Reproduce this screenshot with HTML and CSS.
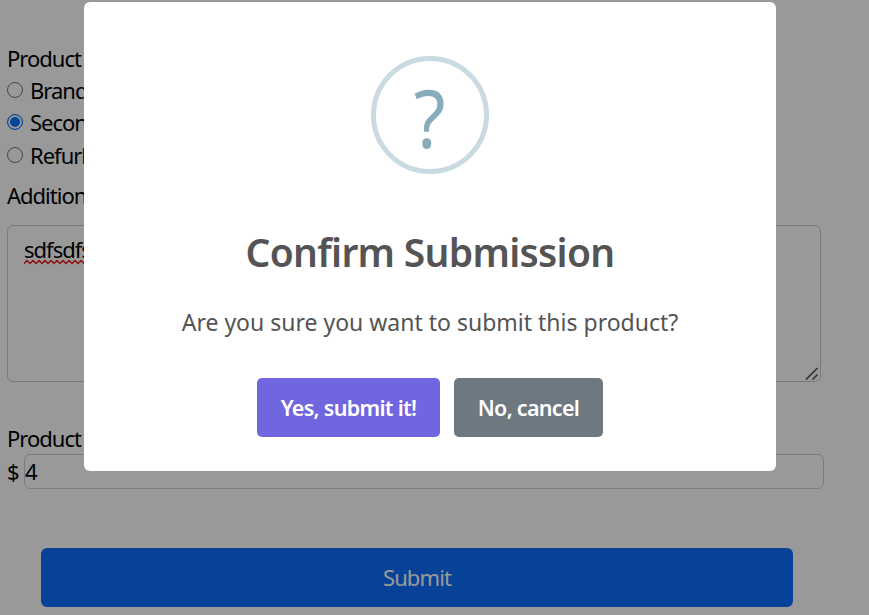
FILE: index.html
```html
<!DOCTYPE html>
<html lang="en">
<head>
<meta charset="utf-8">
<title>Product submission</title>
<link rel="stylesheet" href="styles.css">
</head>
<body>
<form class="form">
  <div class="label">Product</div>
  <div class="option"><span class="radio"></span><span>Brand</span></div>
  <div class="option"><span class="radio checked"></span><span>Secon</span></div>
  <div class="option"><span class="radio"></span><span>Refurb</span></div>
  <div class="label details-label">Addition</div>
  <div class="textarea"><span>sdfsdfs</span>
    <svg class="squiggle" width="66" height="6" viewBox="0 0 66 6"><path d="M0 4.5l3-3 3 3 3-3 3 3 3-3 3 3 3-3 3 3 3-3 3 3 3-3 3 3 3-3 3 3 3-3 3 3 3-3 3 3 3-3 3 3 3-3 3 3" /></svg>
    <svg class="grip" width="14" height="14" viewBox="0 0 14 14"><path d="M1 12.5 12.5 1M7.5 12.5l5-5" /></svg>
  </div>
  <div class="label price-label">Product</div>
  <div class="price"><span class="currency">$</span><div class="input">4</div></div>
  <div class="submit">Submit</div>
</form>
<div class="overlay">
  <div class="modal" role="dialog">
    <div class="icon"><span class="mark">?</span></div>
    <h2 class="title"><span>Confirm Submission</span></h2>
    <p class="message">Are you sure you want to submit this product?</p>
    <div class="actions">
      <button class="btn confirm" type="button">Yes, submit it!</button>
      <button class="btn cancel" type="button">No, cancel</button>
    </div>
  </div>
</div>
</body>
</html>
```
FILE: styles.css
```css
* { box-sizing: border-box; }
body {
  margin: 0;
  height: 615px;
  overflow: hidden;
  background: #fff;
  color: #000;
  font: 22px/32px "Segoe UI", "Noto Sans", "Open Sans", sans-serif;
  letter-spacing: -1px;
}
.form { padding: 42px 0 0 7px; }
.label { height: 32px; }
.option { display: flex; height: 32.4px; gap: 7px; }
.radio {
  width: 16px;
  height: 16px;
  margin-top: 8px;
  border: 1.4px solid #767676;
  border-radius: 50%;
  background: #fff;
}
.radio.checked {
  border: 1.5px solid #0075ff;
  background: #0075ff;
  box-shadow: inset 0 0 0 2px #fff;
}
.details-label { margin-top: 8px; }
.textarea {
  position: relative;
  width: 814px;
  height: 157px;
  margin-top: 14px;
  padding: 7px 16px;
  border: 1px solid #ccc;
  border-radius: 6px;
}
.squiggle {
  position: absolute;
  left: 16px;
  top: 33px;
  fill: none;
  stroke: #f01818;
  stroke-width: 1.5;
}
.grip {
  position: absolute;
  right: 1px;
  bottom: 0;
  fill: none;
  stroke: #555;
  stroke-width: 1.7;
}
.price-label { margin-top: 40px; height: 32px; }
.price { display: flex; gap: 5px; height: 35px; }
.currency { width: 12px; line-height: 34px; }
.input {
  width: 800px;
  border: 1px solid #ceced8;
  border-radius: 6px;
  line-height: 32px;
}
.submit {
  width: 752px;
  height: 59px;
  margin: 59px 0 0 34px;
  border-radius: 6px;
  background: #0d6efd;
  color: #fff;
  line-height: 59px;
  text-align: center;
  letter-spacing: -0.9px;
}
.overlay {
  position: fixed;
  inset: 0;
  padding: 2px 0 0 84px;
  background: rgba(0, 0, 0, .4);
}
.modal {
  display: flex;
  flex-direction: column;
  align-items: center;
  width: 692px;
  height: 469px;
  padding-top: 54px;
  border-radius: 6px;
  background: #fff;
  color: #545454;
}
.icon {
  display: flex;
  justify-content: center;
  width: 118px;
  height: 118px;
  border: 5px solid #c9dae1;
  border-radius: 50%;
  color: #87adbd;
}
.mark {
  font-size: 81px;
  line-height: 112px;
  letter-spacing: 0;
  transform: scaleX(.9);
}
.title {
  margin: 49px 0 0;
  font-size: 39px;
  line-height: 58px;
  font-weight: 600;
  letter-spacing: -0.7px;
}
.message {
  margin: 24px 0 0;
  font-size: 23px;
  line-height: 34px;
  letter-spacing: 0;
  white-space: nowrap;
}
.actions { display: flex; gap: 14px; margin-top: 39px; }
.btn {
  height: 59px;
  padding: 0;
  border: 0;
  border-radius: 5px;
  color: #fff;
  font: 600 21.5px/59px "Segoe UI", "Noto Sans", "Open Sans", sans-serif;
  letter-spacing: -0.7px;
}
.confirm { width: 183px; background: #7066e0; }
.cancel { width: 149px; background: #6e7881; }
```
